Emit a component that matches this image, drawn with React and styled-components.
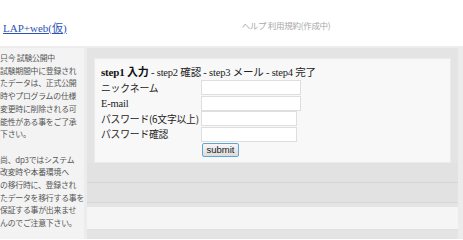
import React from 'react';
import styled, { createGlobalStyle } from 'styled-components';

const GlobalStyle = createGlobalStyle`
  html, body {
    margin: 0;
    padding: 0;
    background: #ffffff;
    overflow: hidden;
  }
  body {
    font-family: "Liberation Serif", "Noto Sans CJK JP", serif;
  }
`;

const Page = styled.div`
  width: 463px;
  height: 239px;
  overflow: hidden;
`;

const Header = styled.div`
  height: 46px;
  display: flex;
  align-items: flex-start;
  background: #fff;
`;

const Logo = styled.a`
  margin: 19px 0 0 3px;
  font-size: 11px;
  color: #2a55b5;
  text-decoration: underline;
  font-family: "Liberation Serif", "Noto Sans CJK JP", serif;
`;

const Nav = styled.div`
  margin: 19px 0 0 175px;
  font-size: 8.5px;
  color: #a8a8a8;
  font-family: "Noto Sans CJK JP", sans-serif;
  letter-spacing: -0.3px;
`;

const Body = styled.div`
  display: flex;
  height: 193px;
  background: #ececec;
  padding-top: 2px;
`;

const Sidebar = styled.div`
  width: 84px;
  flex-shrink: 0;
  background: #f3f3f3;
  overflow: hidden;
  padding-top: 4px;
  margin-right: 3px;
`;

const Note = styled.p`
  margin: 0 0 12.7px 0;
  font-size: 7.9px;
  line-height: 12.7px;
  letter-spacing: -0.25px;
  color: #555;
  white-space: nowrap;
  font-family: "Noto Sans CJK JP", sans-serif;
`;

const Main = styled.div`
  width: 371px;
  flex-shrink: 0;
  background: #e4e4e4;
  padding-top: 10px;
  display: flex;
  flex-direction: column;
`;

const FormBox = styled.div`
  margin: 0 7px;
  height: 105px;
  box-sizing: border-box;
  background: #f8f8f8;
  border: 1px solid #ebebeb;
  padding: 6px 0 0 6px;
`;

const Steps = styled.div`
  font-size: 10.5px;
  color: #222;
  line-height: 14px;
  white-space: nowrap;
  letter-spacing: -0.2px;
`;

const StepOn = styled.b`
  font-weight: bold;
  font-size: 11px;
  color: #111;
`;

const Row = styled.div`
  display: flex;
  align-items: center;
  height: 15.5px;
`;

const Label = styled.div`
  width: 100px;
  font-size: ${(p) => (p.$latin ? '10.5px' : '9.8px')};
  color: #222;
  white-space: nowrap;
  letter-spacing: -0.2px;
  font-family: ${(p) => (p.$latin ? '"Liberation Serif", serif' : '"Noto Sans CJK JP", sans-serif')};
`;

const Input = styled.input`
  width: ${(p) => p.$w}px;
  height: 15px;
  box-sizing: border-box;
  border: 1px solid #dedede;
  background: #fff;
  padding: 0;
  margin: 0;
  outline: none;
`;

const ButtonRow = styled.div`
  display: flex;
  padding: 1px 0 0 101px;
`;

const Submit = styled.button`
  width: 37px;
  height: 14px;
  padding: 0;
  font-size: 9.5px;
  line-height: 12px;
  font-family: "Liberation Sans", Arial, sans-serif;
  color: #222;
  border: 1px solid #5fa6d6;
  border-radius: 2px;
  background: linear-gradient(#f6f6f6, #dcdcdc);
`;

const Band = styled.div`
  height: 19px;
  background: #e2e2e2;
  border-bottom: 1px solid #d6d6d6;
`;

const Gap = styled.div`
  height: 4px;
  background: #e4e4e4;
`;

const LowerBox = styled.div`
  height: 22px;
  background: #f5f5f5;
  border-bottom: 1px solid #e0e0e0;
`;

const rows = [
  { label: 'ニックネーム', w: 100 },
  { label: 'E-mail', w: 100, latin: true },
  { label: 'パスワード(6文字以上)', w: 96 },
  { label: 'パスワード確認', w: 96 },
];

export default function App() {
  return (
    <Page>
      <GlobalStyle />
      <Header>
        <Logo href="#">LAP+web(仮)</Logo>
        <Nav>ヘルプ 利用規約(作成中)</Nav>
      </Header>
      <Body>
        <Sidebar>
          <Note>
            只今 試験公開中<br />
            試験期間中に登録され<br />
            たデータは、正式公開<br />
            時やプログラムの仕様<br />
            変更時に削除される可<br />
            能性がある事をご了承<br />
            下さい。
          </Note>
          <Note>
            尚、dp3ではシステム<br />
            改変時や本番環境へ<br />
            の移行時に、登録され<br />
            たデータを移行する事を<br />
            保証する事が出来ませ<br />
            んのでご注意下さい。
          </Note>
        </Sidebar>
        <Main>
          <FormBox>
            <Steps>
              <StepOn>step1 入力</StepOn> - step2 確認 - step3 メール - step4 完了
            </Steps>
            {rows.map((r) => (
              <Row key={r.label}>
                <Label $latin={r.latin}>{r.label}</Label>
                <Input $w={r.w} />
              </Row>
            ))}
            <ButtonRow>
              <Submit>submit</Submit>
            </ButtonRow>
          </FormBox>
          <Band />
          <Band />
          <Gap />
          <LowerBox />
        </Main>
      </Body>
    </Page>
  );
}
